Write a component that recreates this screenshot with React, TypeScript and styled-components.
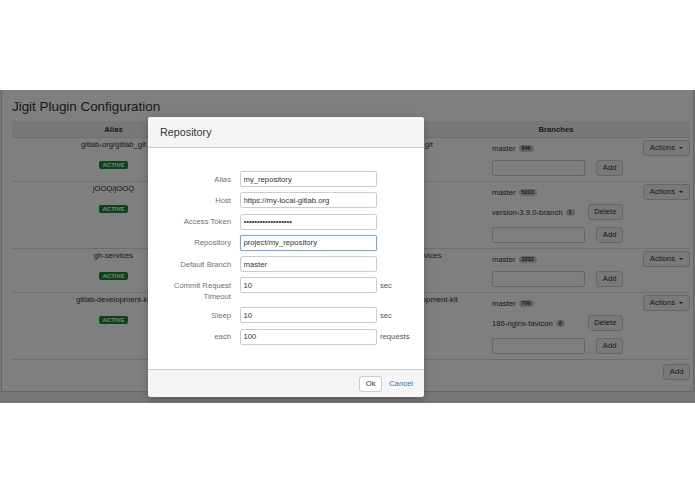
import React from 'react';
import styled, { createGlobalStyle } from 'styled-components';

const GlobalStyle = createGlobalStyle`
  html, body {
    margin: 0;
    background: #fff;
    font-family: "Liberation Sans", Arial, sans-serif;
    color: #333;
  }
`;

interface Branch {
  name: string;
  commits: number;
  deletable?: boolean;
}

interface Repo {
  alias: string;
  path: string;
  branches: Branch[];
}

const repos: Repo[] = [
  { alias: 'gitlab-org/gitlab_git', path: 'gitlab-org/gitlab_git', branches: [{ name: 'master', commits: 846 }] },
  {
    alias: 'jOOQ/jOOQ',
    path: 'jOOQ/jOOQ',
    branches: [
      { name: 'master', commits: 5213 },
      { name: 'version-3.9.0-branch', commits: 1, deletable: true },
    ],
  },
  { alias: 'gh-services', path: 'gitlab-org/gh-services', branches: [{ name: 'master', commits: 3332 }] },
  {
    alias: 'gitlab-development-kit',
    path: 'gdk/gitlab-development-kit',
    branches: [
      { name: 'master', commits: 799 },
      { name: '186-nginx-favicon', commits: 8, deletable: true },
    ],
  },
];

const Page = styled.div`
  position: relative;
  margin-top: 90px;
  height: 313px;
  padding: 0 1px;
  background: #efefef;
`;

const Panel = styled.div`
  height: 302px;
  box-sizing: border-box;
  background: #fff;
  border: 1px solid #ccc;
  border-top: 0;
  padding: 9px 3px 0 10px;
`;

const Title = styled.h1`
  margin: 0 0 6px;
  font-size: 13.4px;
  line-height: 16px;
  font-weight: normal;
  color: #333;
`;

const HeaderRow = styled.div`
  display: grid;
  grid-template-columns: 203px 212px 1fr;
  height: 16px;
  align-items: center;
  background: #f0f0f0;
`;

const HeadCell = styled.div<{ $shift?: number }>`
  text-align: center;
  font-size: 7.7px;
  font-weight: bold;
  padding-right: ${p => p.$shift || 0}px;
`;

const Row = styled.div`
  display: grid;
  grid-template-columns: 203px 212px 1fr;
  border-top: 1px solid #ddd;
`;

const AliasCell = styled.div`
  display: flex;
  flex-direction: column;
  align-items: center;
  padding-top: 1px;
  font-size: 7.7px;
  line-height: 12px;
`;

const PathCell = styled.div`
  padding: 1px 0 0 153px;
  font-size: 7.7px;
  line-height: 12px;
  white-space: nowrap;
`;

const Lozenge = styled.span`
  margin-top: 10px;
  height: 8px;
  line-height: 8px;
  padding: 0 3.5px;
  border-radius: 2px;
  background: #14892c;
  color: #fff;
  font-size: 6px;
  font-weight: bold;
`;

const BranchCell = styled.div`
  display: flex;
  align-items: flex-start;
  padding: 2px 0 5px 65px;
`;

const BranchList = styled.div`
  display: flex;
  flex-direction: column;
  gap: 4px;
  width: 131px;
`;

const BranchLine = styled.div<{ $deletable?: boolean }>`
  display: flex;
  align-items: center;
  justify-content: space-between;
  height: 16px;
  margin-bottom: ${p => (p.$deletable ? 3 : 0)}px;
  font-size: 7.7px;
  white-space: nowrap;
`;

const Count = styled.span`
  display: inline-block;
  margin-left: 3px;
  padding: 0 3px;
  height: 7px;
  line-height: 7px;
  border-radius: 4px;
  background: #ccc;
  color: #333;
  font-size: 5.5px;
  font-weight: bold;
  vertical-align: 1px;
`;

const Button = styled.button`
  box-sizing: border-box;
  height: 16px;
  padding: 0 5.5px;
  border: 1px solid #ccc;
  border-radius: 3px;
  background: #f2f2f2;
  color: #333;
  font-family: inherit;
  font-size: 7.7px;
  line-height: 14px;
  display: inline-flex;
  align-items: center;
  gap: 4px;
`;

const ActionsButton = styled(Button)`
  margin-left: auto;
  padding: 0 6px;
`;

const Caret = styled.span`
  width: 0;
  height: 0;
  border-left: 2.5px solid transparent;
  border-right: 2.5px solid transparent;
  border-top: 2.5px solid #333;
`;

const BranchInput = styled.input`
  box-sizing: border-box;
  width: 93px;
  height: 16px;
  border: 1px solid #ccc;
  border-radius: 2px;
  background: #fff;
`;

const TableFooter = styled.div`
  display: flex;
  justify-content: flex-end;
  padding-top: 3.5px;
  border-top: 1px solid #ddd;
`;

const Overlay = styled.div`
  position: absolute;
  inset: 0;
  background: rgba(0, 0, 0, 0.5);
`;

const Modal = styled.div`
  position: absolute;
  left: 148px;
  top: 27px;
  width: 276px;
  height: 280px;
  display: flex;
  flex-direction: column;
  background: #fff;
  border-radius: 3px;
  box-shadow: 0 3px 8px rgba(0, 0, 0, 0.25);
  overflow: hidden;
`;

const ModalHeader = styled.div`
  box-sizing: border-box;
  height: 31px;
  display: flex;
  align-items: center;
  padding-left: 12px;
  background: #f5f5f5;
  border-bottom: 1px solid #ccc;
  font-size: 10.8px;
  color: #333;
`;

const Form = styled.div`
  flex: 1;
  display: grid;
  grid-template-columns: 79px 137px auto;
  grid-auto-rows: min-content;
  row-gap: 5.3px;
  align-content: start;
  padding: 23px 0 0 13px;
`;

const Label = styled.label`
  padding: 2.5px 9px 0 0;
  text-align: right;
  font-size: 7.7px;
  line-height: 11px;
  color: #707070;
`;

const Field = styled.input<{ $focused?: boolean }>`
  box-sizing: border-box;
  width: 137px;
  height: 16px;
  padding: 0 2.5px;
  border: 1px solid ${p => (p.$focused ? '#7ca6dc' : '#ccc')};
  border-radius: 2px;
  box-shadow: ${p => (p.$focused ? '0 0 1px #7ca6dc' : 'none')};
  font-family: inherit;
  font-size: 7.7px;
  color: #333;
  outline: none;
`;

const Unit = styled.span`
  padding: 2.5px 0 0 3px;
  font-size: 7.7px;
  line-height: 11px;
  color: #555;
`;

const ModalFooter = styled.div`
  box-sizing: border-box;
  height: 28px;
  display: flex;
  align-items: center;
  justify-content: flex-end;
  gap: 7px;
  padding-right: 11px;
  background: #f5f5f5;
  border-top: 1px solid #ccc;
`;

const OkButton = styled(Button)`
  background: #fff;
`;

const CancelLink = styled.a`
  font-size: 7.7px;
  color: #3572b0;
  text-decoration: none;
`;

const fields = [
  { label: 'Alias', value: 'my_repository' },
  { label: 'Host', value: 'https://my-local-gitlab.org' },
  { label: 'Access Token', value: 'xxxxxxxxxxxxxxxxxx', password: true },
  { label: 'Repository', value: 'project/my_repository', focused: true },
  { label: 'Default Branch', value: 'master' },
  { label: 'Commit Request Timeout', value: '10', unit: 'sec' },
  { label: 'Sleep', value: '10', unit: 'sec' },
  { label: 'each', value: '100', unit: 'requests' },
];

export default function App() {
  return (
    <>
      <GlobalStyle />
      <Page>
        <Panel>
          <Title>Jigit Plugin Configuration</Title>
          <HeaderRow>
            <HeadCell>Alias</HeadCell>
            <HeadCell>Repository</HeadCell>
            <HeadCell $shift={5}>Branches</HeadCell>
          </HeaderRow>
          {repos.map(repo => (
            <Row key={repo.alias}>
              <AliasCell>
                {repo.alias}
                <Lozenge>ACTIVE</Lozenge>
              </AliasCell>
              <PathCell>{repo.path}</PathCell>
              <BranchCell>
                <BranchList>
                  {repo.branches.map(b => (
                    <BranchLine key={b.name} $deletable={b.deletable}>
                      <span>
                        {b.name}
                        <Count>{b.commits}</Count>
                      </span>
                      {b.deletable && <Button>Delete</Button>}
                    </BranchLine>
                  ))}
                  <BranchLine>
                    <BranchInput />
                    <Button>Add</Button>
                  </BranchLine>
                </BranchList>
                <ActionsButton>
                  Actions <Caret />
                </ActionsButton>
              </BranchCell>
            </Row>
          ))}
          <TableFooter>
            <Button>Add</Button>
          </TableFooter>
        </Panel>
        <Overlay />
        <Modal>
          <ModalHeader>Repository</ModalHeader>
          <Form>
            {fields.map(f => (
              <React.Fragment key={f.label}>
                <Label>{f.label}</Label>
                <Field
                  type={f.password ? 'password' : 'text'}
                  defaultValue={f.value}
                  $focused={f.focused}
                />
                <Unit>{f.unit}</Unit>
              </React.Fragment>
            ))}
          </Form>
          <ModalFooter>
            <OkButton>Ok</OkButton>
            <CancelLink href="#">Cancel</CancelLink>
          </ModalFooter>
        </Modal>
      </Page>
    </>
  );
}
